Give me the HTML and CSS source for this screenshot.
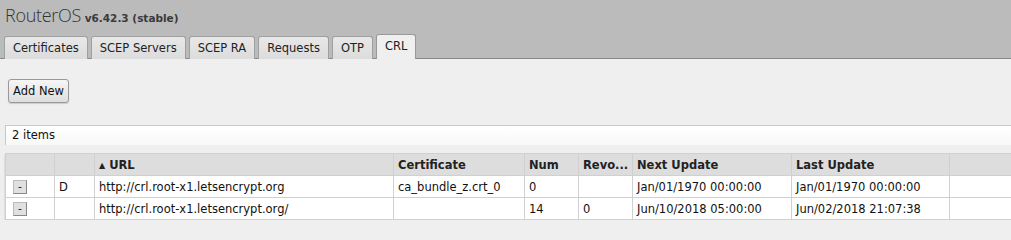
FILE: index.html
```html
<!DOCTYPE html>
<html lang="en">
<head>
    <meta charset="UTF-8">
    <title>RouterOS</title>
    <link rel="stylesheet" href="styles.css">
</head>
<body>
    <div class="header">
        <div class="title"><span class="brand">RouterOS</span> <span class="version">v6.42.3 (stable)</span></div>
        <div class="tabs">
            <div class="tab">Certificates</div>
            <div class="tab">SCEP Servers</div>
            <div class="tab">SCEP RA</div>
            <div class="tab">Requests</div>
            <div class="tab">OTP</div>
            <div class="tab active">CRL</div>
        </div>
    </div>
    <div class="content">
        <div class="toolbar">
            <button class="btn">Add New</button>
        </div>
        <div class="count">2 items</div>
        <table class="grid">
            <colgroup>
                <col class="c-btn">
                <col class="c-flag">
                <col class="c-url">
                <col class="c-cert">
                <col class="c-num">
                <col class="c-revo">
                <col class="c-date">
                <col class="c-date2">
                <col class="c-rest">
            </colgroup>
            <thead>
                <tr>
                    <th></th>
                    <th></th>
                    <th><span class="sort">&#9650;</span> URL</th>
                    <th>Certificate</th>
                    <th>Num</th>
                    <th>Revo...</th>
                    <th>Next Update</th>
                    <th>Last Update</th>
                    <th></th>
                </tr>
            </thead>
            <tbody>
                <tr>
                    <td><span class="rm">-</span></td>
                    <td>D</td>
                    <td>http://crl.root-x1.letsencrypt.org</td>
                    <td>ca_bundle_z.crt_0</td>
                    <td>0</td>
                    <td></td>
                    <td>Jan/01/1970 00:00:00</td>
                    <td>Jan/01/1970 00:00:00</td>
                    <td></td>
                </tr>
                <tr>
                    <td><span class="rm">-</span></td>
                    <td></td>
                    <td>http://crl.root-x1.letsencrypt.org/</td>
                    <td></td>
                    <td>14</td>
                    <td>0</td>
                    <td>Jun/10/2018 05:00:00</td>
                    <td>Jun/02/2018 21:07:38</td>
                    <td></td>
                </tr>
            </tbody>
        </table>
    </div>
</body>
</html>
```

FILE: styles.css
```css
body {
    margin: 0;
    background-color: #efefef;
    font-family: 'DejaVu Sans', Verdana, sans-serif;
    font-size: 11.5px;
    color: #111;
    overflow: hidden;
}
.header {
    background-color: #bbbbbb;
    border-bottom: 1px solid #888;
    height: 58px;
    display: flex;
    flex-direction: column;
    justify-content: space-between;
}
.title {
    padding: 3px 0 0 5px;
    color: #333;
    white-space: nowrap;
}
.brand {
    font-family: 'Open Sans', sans-serif;
    font-weight: 300;
    font-size: 18px;
    letter-spacing: -0.3px;
}
.version {
    font-weight: bold;
    font-size: 10.5px;
    color: #3a3a3a;
}
.tabs {
    display: flex;
    gap: 3px;
    padding-left: 4px;
    align-items: flex-end;
}
.tab {
    height: 22px;
    line-height: 22px;
    padding: 0 8px;
    border: 1px solid #a0a0a0;
    border-bottom: none;
    border-radius: 3px 3px 0 0;
    background: linear-gradient(#e8e8e8, #dcdcdc);
    color: #222;
    margin-bottom: -1px;
}
.tab.active {
    height: 24px;
    background: #efefef;
    border-color: #999;
    position: relative;
    z-index: 1;
}
.content {
    padding: 20px 0 0 5px;
}
.toolbar {
    padding-left: 3px;
}
.btn {
    font-family: inherit;
    font-size: 11.5px;
    height: 24px;
    padding: 0 4px;
    border: 1px solid #999;
    border-radius: 3px;
    background: linear-gradient(#f6f6f6, #dedede);
    box-shadow: 0 1px 1px rgba(0, 0, 0, 0.15);
    color: #111;
}
.count {
    margin-top: 22px;
    width: 1100px;
    height: 19px;
    line-height: 19px;
    padding-left: 6px;
    background: linear-gradient(#ffffff, #f8f8f8);
    border-top: 1px solid #c8c8c8;
    border-left: 1px solid #c8c8c8;
}
.grid {
    margin-top: 8px;
    border-collapse: collapse;
    table-layout: fixed;
    width: 1105px;
    background: #fff;
    box-shadow: 0 2px 2px rgba(0, 0, 0, 0.2);
}
.c-btn { width: 49px; }
.c-flag { width: 40px; }
.c-url { width: 299px; }
.c-cert { width: 131px; }
.c-num { width: 54px; }
.c-revo { width: 54px; }
.c-date { width: 159px; }
.c-date2 { width: 158px; }
.c-rest { width: 161px; }
.grid th, .grid td {
    border: 1px solid #d0d0d0;
    height: 21px;
    padding: 0 0 0 4px;
    text-align: left;
    white-space: nowrap;
    overflow: hidden;
}
.grid th {
    background: #dddddd;
    font-weight: bold;
    color: #222;
}
.sort {
    font-size: 8px;
    vertical-align: 1px;
}
.rm {
    display: inline-block;
    width: 12px;
    height: 12px;
    line-height: 11px;
    margin-left: 3px;
    text-align: center;
    background: #e0e0e0;
    border: 1px solid #888;
    border-top-color: #bbb;
    border-left-color: #bbb;
    font-size: 11px;
    vertical-align: middle;
}
```
